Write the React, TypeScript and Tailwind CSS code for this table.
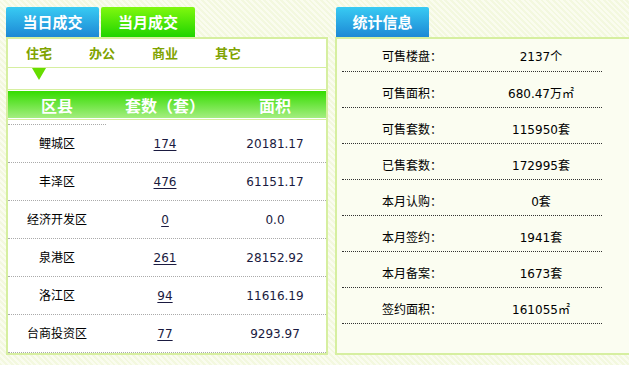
import React from 'react';

const districts = [
  { name: '鲤城区', count: '174', area: '20181.17' },
  { name: '丰泽区', count: '476', area: '61151.17' },
  { name: '经济开发区', count: '0', area: '0.0' },
  { name: '泉港区', count: '261', area: '28152.92' },
  { name: '洛江区', count: '94', area: '11616.19' },
  { name: '台商投资区', count: '77', area: '9293.97' },
];

const stats = [
  { label: '可售楼盘：', value: '2137个' },
  { label: '可售面积：', value: '680.47万㎡' },
  { label: '可售套数：', value: '115950套' },
  { label: '已售套数：', value: '172995套' },
  { label: '本月认购：', value: '0套' },
  { label: '本月签约：', value: '1941套' },
  { label: '本月备案：', value: '1673套' },
  { label: '签约面积：', value: '161055㎡' },
];

const cjk = "font-['DejaVu_Sans','Noto_Sans_CJK_SC',sans-serif]";

function Tab({ label, active, className }: { label: string; active?: boolean; className?: string }) {
  return (
    <div
      className={`h-[30px] w-[93px] shrink-0 rounded-t-[2px] flex items-center justify-center text-white text-[15px] font-bold font-['Noto_Sans_CJK_SC',sans-serif] ${
        active
          ? 'bg-[linear-gradient(#80f80e,#1fd400)]'
          : 'bg-[linear-gradient(#38cbf3,#1d88d5)]'
      } ${className ?? ''}`}
    >
      {label}
    </div>
  );
}

export default function App() {
  return (
    <div className="w-[629px] h-[365px] overflow-hidden bg-[repeating-linear-gradient(45deg,#f3f8df_0px,#f3f8df_2px,#fafcef_2px,#fafcef_4px)]">
      <div className="flex pt-[7px] pl-[6px] gap-[7px]">
        {/* Left column */}
        <div className="w-[322px] shrink-0 flex flex-col">
          <div className="flex">
            <Tab label="当日成交" />
            <Tab label="当月成交" active className="ml-[2px] w-[94px]" />
          </div>
          <div className="border-2 border-[#d6efa0] bg-white">
            <div className="h-[28px] flex items-center text-[13px] font-bold text-[#7fa300] font-['Noto_Sans_CJK_SC',sans-serif]">
              <span className="ml-[18px]">住宅</span>
              <span className="ml-[37px]">办公</span>
              <span className="ml-[37px]">商业</span>
              <span className="ml-[37px]">其它</span>
            </div>
            <div className="h-[22px] border-t border-[#d6efa0] pl-[24px]">
              <div className="w-0 h-0 border-l-[7px] border-r-[7px] border-t-[12px] border-l-transparent border-r-transparent border-t-[#66dd00]" />
            </div>
            <div className="py-px border-y border-[#d6efa0]">
              <div className="h-[27px] flex items-center text-white text-[16px] font-bold font-['Noto_Sans_CJK_SC',sans-serif] bg-[linear-gradient(#34dc00,#a4ee80)]">
                <div className="w-[98px] text-center">区县</div>
                <div className="w-[118px] text-center">套数（套）</div>
                <div className="flex-1 text-center">面积</div>
              </div>
            </div>
            <div className="pt-[4px]">
              <div className="w-[98px] border-b border-dotted border-[#aaaaaa]" />
              {districts.map((d) => (
                <div
                  key={d.name}
                  className={`h-[38px] flex items-center border-b border-dotted border-[#aaaaaa] text-[12px] text-black ${cjk}`}
                >
                  <div className="w-[98px] text-center">{d.name}</div>
                  <div className="w-[118px] text-center">
                    <span className="underline underline-offset-2 text-[#1a1a40]">{d.count}</span>
                  </div>
                  <div className="flex-1 text-center text-[#1a1a40]">{d.area}</div>
                </div>
              ))}
            </div>
          </div>
        </div>

        {/* Right column */}
        <div className="w-[300px] shrink-0 flex flex-col">
          <div className="flex">
            <Tab label="统计信息" className="ml-px" />
          </div>
          <div className="flex-1 border-2 border-[#d6efa0] bg-[#fbfdf1] px-[5px]">
            {stats.map((s, i) => (
              <div
                key={s.label}
                className={`flex items-center w-[260px] border-b border-dotted border-[#333333] text-[12px] text-black ${cjk} ${
                  i === 0 ? 'h-[33px] pt-[4px]' : 'h-[36px] pt-[8px]'
                }`}
              >
                <div className="w-[130px] pl-[40px]">{s.label}</div>
                <div className="w-[130px] pl-[8px] text-center">{s.value}</div>
              </div>
            ))}
          </div>
        </div>
      </div>
    </div>
  );
}
